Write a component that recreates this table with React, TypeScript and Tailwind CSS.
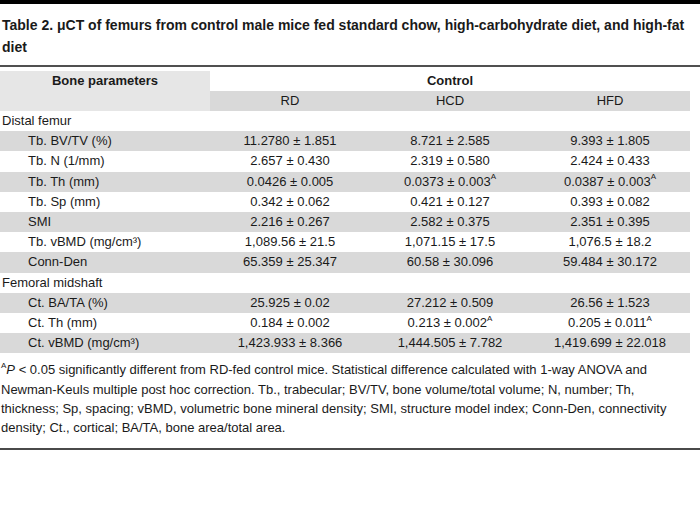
type Row =
  | { kind: "group"; label: string }
  | { kind: "data"; label: React.ReactNode; rd: React.ReactNode; hcd: React.ReactNode; hfd: React.ReactNode; shade: boolean };

const Sup = ({ children }: { children: React.ReactNode }) => (
  <sup className="relative -top-[1px] text-[8px] leading-none align-super">{children}</sup>
);

const rows: Row[] = [
  { kind: "group", label: "Distal femur" },
  { kind: "data", label: "Tb. BV/TV (%)", rd: "11.2780 ± 1.851", hcd: "8.721 ± 2.585", hfd: "9.393 ± 1.805", shade: true },
  { kind: "data", label: "Tb. N (1/mm)", rd: "2.657 ± 0.430", hcd: "2.319 ± 0.580", hfd: "2.424 ± 0.433", shade: false },
  {
    kind: "data",
    label: "Tb. Th (mm)",
    rd: "0.0426 ± 0.005",
    hcd: <>0.0373 ± 0.003<Sup>A</Sup></>,
    hfd: <>0.0387 ± 0.003<Sup>A</Sup></>,
    shade: true,
  },
  { kind: "data", label: "Tb. Sp (mm)", rd: "0.342 ± 0.062", hcd: "0.421 ± 0.127", hfd: "0.393 ± 0.082", shade: false },
  { kind: "data", label: "SMI", rd: "2.216 ± 0.267", hcd: "2.582 ± 0.375", hfd: "2.351 ± 0.395", shade: true },
  { kind: "data", label: "Tb. vBMD (mg/cm³)", rd: "1,089.56 ± 21.5", hcd: "1,071.15 ± 17.5", hfd: "1,076.5 ± 18.2", shade: false },
  { kind: "data", label: "Conn-Den", rd: "65.359 ± 25.347", hcd: "60.58 ± 30.096", hfd: "59.484 ± 30.172", shade: true },
  { kind: "group", label: "Femoral midshaft" },
  { kind: "data", label: "Ct. BA/TA (%)", rd: "25.925 ± 0.02", hcd: "27.212 ± 0.509", hfd: "26.56 ± 1.523", shade: true },
  {
    kind: "data",
    label: "Ct. Th (mm)",
    rd: "0.184 ± 0.002",
    hcd: <>0.213 ± 0.002<Sup>A</Sup></>,
    hfd: <>0.205 ± 0.011<Sup>A</Sup></>,
    shade: false,
  },
  { kind: "data", label: "Ct. vBMD (mg/cm³)", rd: "1,423.933 ± 8.366", hcd: "1,444.505 ± 7.782", hfd: "1,419.699 ± 22.018", shade: true },
];

export default function App() {
  return (
    <div
      className="w-[700px] h-[520px] bg-white text-[#1a1a1a] overflow-hidden"
      style={{ fontFamily: "'Liberation Sans', Arial, sans-serif" }}
    >
      <div className="h-[4px] bg-black" />

      {/* caption */}
      <h1 className="mt-[10px] px-[2px] text-[14px] leading-[22px] font-bold">
        Table 2. μCT of femurs from control male mice fed standard chow, high-carbohydrate diet, and high-fat diet
      </h1>
      <div className="mt-[7px] h-[2px] bg-[#505050]" />

      {/* table */}
      <div className="mt-[4px] w-[690px] text-[13px] leading-[20px]">
        <div className="flex">
          <div className="w-[210px] h-[40px] bg-[#e6e6e6] text-center font-bold">Bone parameters</div>
          <div className="flex flex-col w-[480px]">
            <div className="h-[20px] text-center font-bold">Control</div>
            <div className="h-[20px] bg-[#d9d9d9] grid grid-cols-3 text-center">
              <span>RD</span>
              <span>HCD</span>
              <span>HFD</span>
            </div>
          </div>
        </div>

        {rows.map((r, i) =>
          r.kind === "group" ? (
            <div key={i} className="h-[20.2px] pl-[2px]">
              {r.label}
            </div>
          ) : (
            <div key={i} className={`flex h-[20.2px] ${r.shade ? "bg-[#d9d9d9]" : ""}`}>
              <div className="w-[210px] pl-[28px]">{r.label}</div>
              <div className="w-[160px] text-center">{r.rd}</div>
              <div className="w-[160px] text-center">{r.hcd}</div>
              <div className="w-[160px] text-center">{r.hfd}</div>
            </div>
          )
        )}
      </div>

      {/* footnote */}
      <p className="mt-[7px] px-[1px] text-[13px] leading-[19.3px] whitespace-nowrap">
        <Sup>A</Sup>
        <i>P</i> &lt; 0.05 significantly different from RD-fed control mice. Statistical difference calculated with 1-way ANOVA and
        <br />
        Newman-Keuls multiple post hoc correction. Tb., trabecular; BV/TV, bone volume/total volume; N, number; Th,
        <br />
        thickness; Sp, spacing; vBMD, volumetric bone mineral density; SMI, structure model index; Conn-Den, connectivity
        <br />
        density; Ct., cortical; BA/TA, bone area/total area.
      </p>
      <div className="mt-[11px] h-[2px] bg-[#4a4a4a]" />
    </div>
  );
}
